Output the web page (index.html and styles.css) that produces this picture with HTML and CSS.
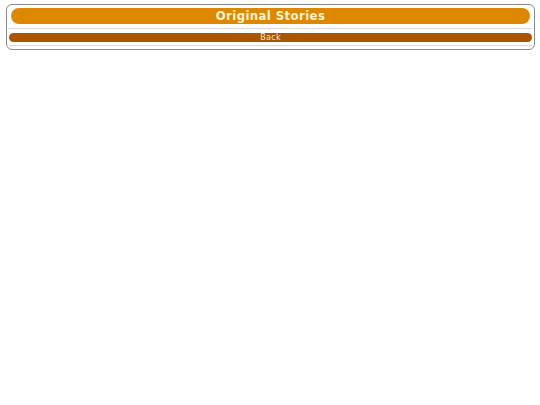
FILE: index.html
```html
<!DOCTYPE html>
<html>
<head>
<meta charset="utf-8">
<link rel="stylesheet" href="styles.css">
</head>
<body>
<div class="panel">
  <div class="title-bar">Original Stories</div>
  <div class="sep sep-top"></div>
  <div class="back-bar">Back</div>
  <div class="sep sep-bottom"></div>
</div>
</body>
</html>
```
FILE: styles.css
```css
html, body {
  margin: 0;
  padding: 0;
  background: #ffffff;
}
body {
  font-family: "DejaVu Sans", sans-serif;
}
.panel {
  margin: 4px 0 0 6px;
  width: 523px;
  border: 1px solid #8a8a8a;
  border-radius: 6px;
  padding: 3px 2px 3px 2px;
  display: flex;
  flex-direction: column;
}
.title-bar {
  margin: 0 2px;
  height: 16px;
  border-radius: 8px;
  background: #dd8800;
  color: #fff4d0;
  font-family: "DejaVu Sans Condensed", "DejaVu Sans", sans-serif;
  font-weight: bold;
  font-size: 13px;
  line-height: 16px;
  text-align: center;
  letter-spacing: 0.4px;
}
.sep {
  height: 1px;
  background: #d8d8d8;
}
.sep-top {
  margin: 4px 0 4px 0;
}
.sep-bottom {
  margin: 3px 0 0 0;
}
.back-bar {
  height: 9px;
  border-radius: 5px;
  background: #aa5500;
  color: #f8e8cc;
  font-size: 8px;
  line-height: 9px;
  text-align: center;
  letter-spacing: 0.3px;
}
```
